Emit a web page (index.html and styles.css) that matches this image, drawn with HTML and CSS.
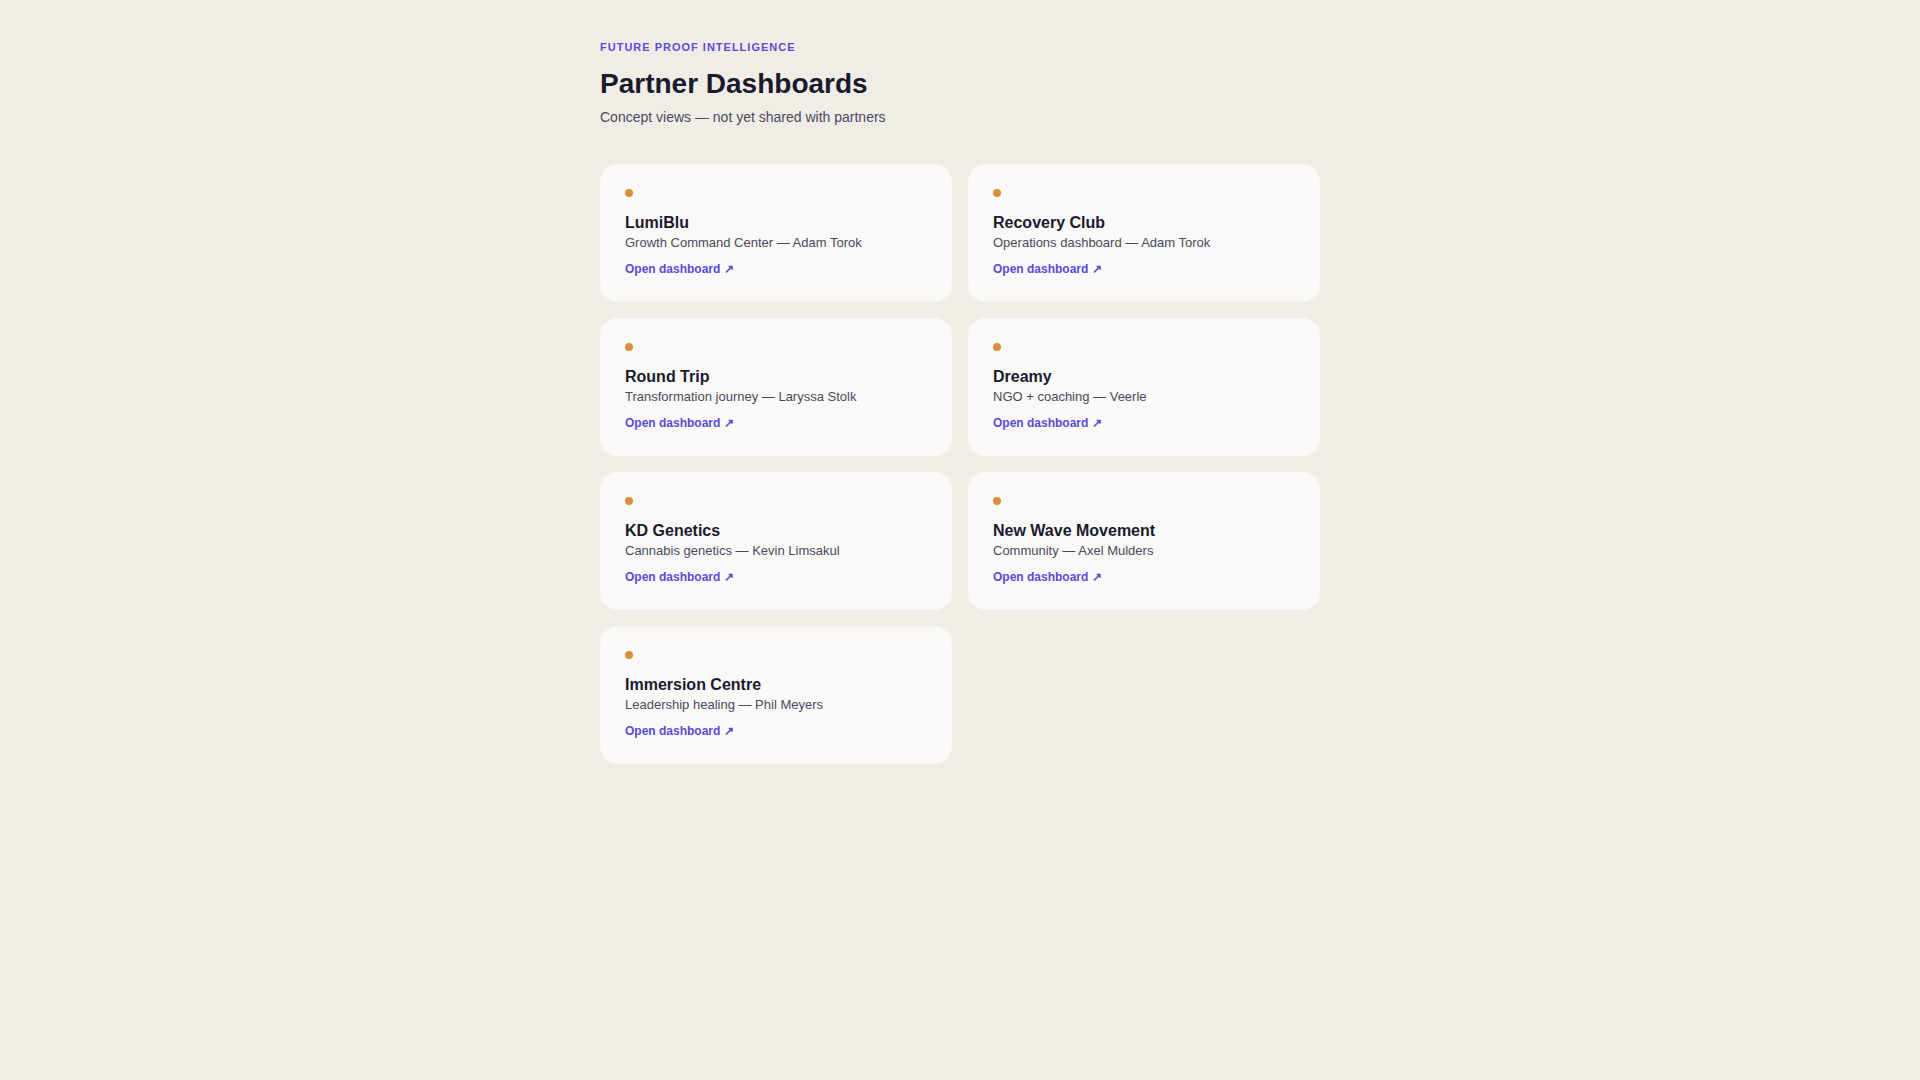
FILE: index.html
```html
<!DOCTYPE html>
<html lang="en">
<head>
<meta charset="utf-8">
<title>Partner Dashboards</title>
<link rel="stylesheet" href="styles.css">
</head>
<body>
<main class="page">
  <header class="head">
    <div class="eyebrow">FUTURE PROOF INTELLIGENCE</div>
    <h1 class="title">Partner Dashboards</h1>
    <p class="subtitle">Concept views — not yet shared with partners</p>
  </header>
  <section class="grid">
    <div class="card"><span class="dot"></span><h2 class="name">LumiBlu</h2><p class="desc">Growth Command Center — Adam Torok</p><a class="link" href="#">Open dashboard ↗</a></div>
    <div class="card"><span class="dot"></span><h2 class="name">Recovery Club</h2><p class="desc">Operations dashboard — Adam Torok</p><a class="link" href="#">Open dashboard ↗</a></div>
    <div class="card"><span class="dot"></span><h2 class="name">Round Trip</h2><p class="desc">Transformation journey — Laryssa Stolk</p><a class="link" href="#">Open dashboard ↗</a></div>
    <div class="card"><span class="dot"></span><h2 class="name">Dreamy</h2><p class="desc">NGO + coaching — Veerle</p><a class="link" href="#">Open dashboard ↗</a></div>
    <div class="card"><span class="dot"></span><h2 class="name">KD Genetics</h2><p class="desc">Cannabis genetics — Kevin Limsakul</p><a class="link" href="#">Open dashboard ↗</a></div>
    <div class="card"><span class="dot"></span><h2 class="name">New Wave Movement</h2><p class="desc">Community — Axel Mulders</p><a class="link" href="#">Open dashboard ↗</a></div>
    <div class="card"><span class="dot"></span><h2 class="name">Immersion Centre</h2><p class="desc">Leadership healing — Phil Meyers</p><a class="link" href="#">Open dashboard ↗</a></div>
  </section>
</main>
</body>
</html>
```
FILE: styles.css
```css
* { box-sizing: border-box; }
html, body { margin: 0; padding: 0; }
body {
  background: #f0ede7;
  font-family: "Liberation Sans", Arial, sans-serif;
  color: #1a1a2e;
  min-height: 1080px;
}
.page {
  width: 720px;
  margin: 0 auto;
  padding-top: 39px;
}
.eyebrow {
  font-size: 11px;
  line-height: 16px;
  font-weight: 700;
  letter-spacing: 1px;
  color: #5b4bd5;
}
.title {
  margin: 12px 0 0;
  font-size: 28px;
  line-height: 34px;
  font-weight: 700;
  color: #1a1a2e;
}
.subtitle {
  margin: 6px 0 0;
  font-size: 14px;
  line-height: 20px;
  color: #4a4a5e;
}
.grid {
  margin-top: 37px;
  display: grid;
  grid-template-columns: 1fr 1fr;
  gap: 16px;
}
.card {
  background: #faf9f7;
  border: 1px solid #f7f5f1;
  border-radius: 16px;
  padding: 24px;
  display: flex;
  flex-direction: column;
  align-items: flex-start;
}
.dot {
  width: 8px;
  height: 8px;
  border-radius: 50%;
  background: #d6923a;
  margin-bottom: 16px;
}
.name {
  margin: 0;
  font-size: 16px;
  line-height: 20px;
  font-weight: 700;
  color: #1a1a2e;
}
.desc {
  margin: 1px 0 0;
  font-size: 13px;
  line-height: 18px;
  color: #4a4a5e;
}
.link {
  margin-top: 9px;
  font-size: 12px;
  line-height: 16px;
  font-weight: 700;
  color: #5b4bd5;
  text-decoration: none;
}
```
